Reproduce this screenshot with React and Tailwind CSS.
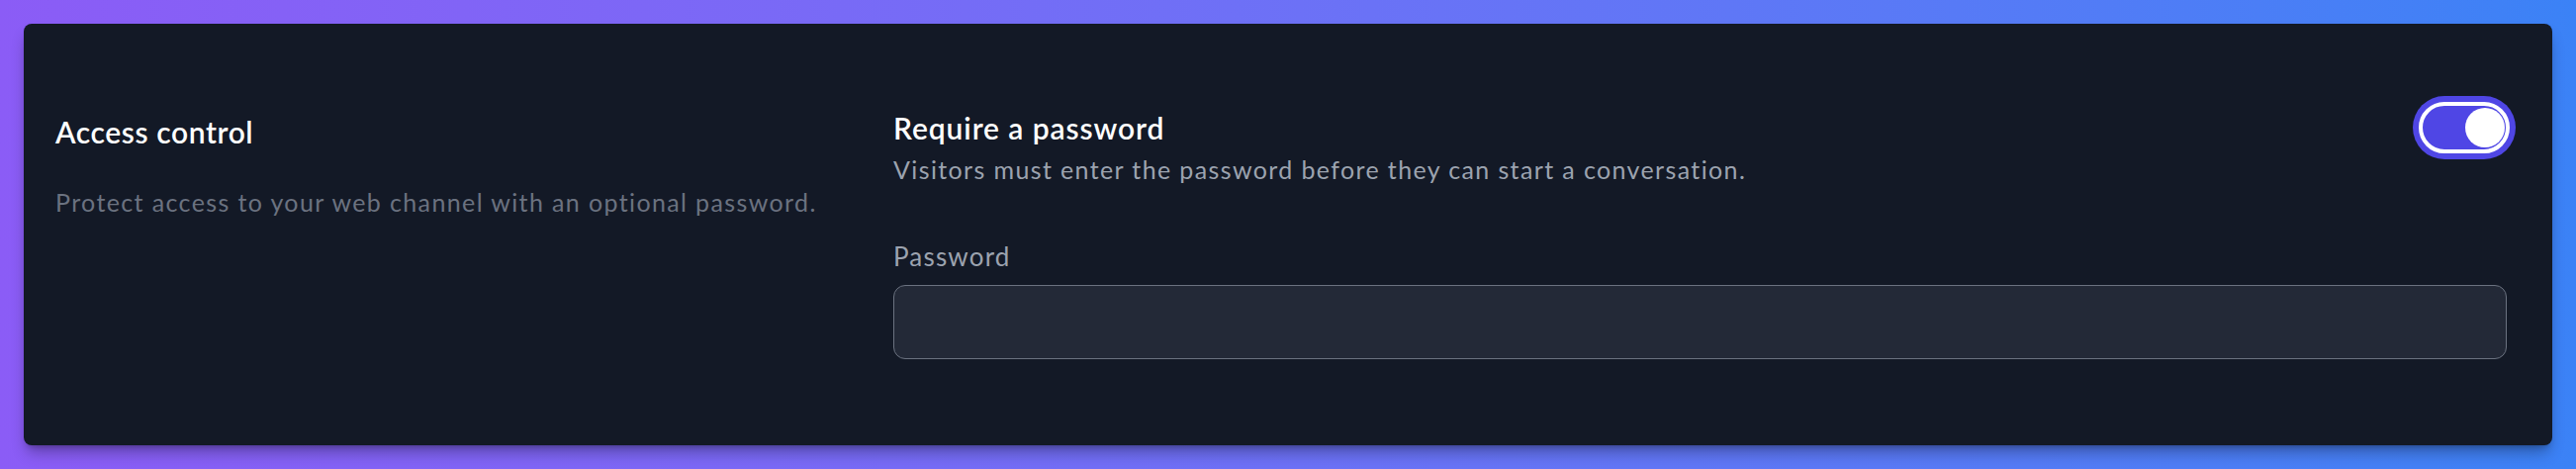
import { useState } from "react";

function Toggle({ checked, onChange }) {
  return (
    <button
      type="button"
      role="switch"
      aria-checked={checked}
      onClick={() => onChange(!checked)}
      className="-mr-[9px] w-[104px] h-[64px] shrink-0 rounded-full bg-[#4f46e5] p-[6px]"
    >
      <span className="flex h-full w-full items-center justify-end rounded-full border-[4px] border-white bg-[#4f46e5] px-[1px]">
        <span className="block h-[40px] w-[40px] rounded-full bg-white" />
      </span>
    </button>
  );
}

export default function App() {
  const [requirePassword, setRequirePassword] = useState(true);
  const [password, setPassword] = useState("");

  return (
    <div
      className="min-h-screen w-full bg-gradient-to-r from-[#8b5cf6] to-[#3b82f6] p-6"
      style={{ fontFamily: "Lato, 'Noto Sans', sans-serif" }}
    >
      <div className="rounded-lg bg-[#131926] pl-8 pr-[46px] pt-[82px] pb-[87px] shadow-lg shadow-black/30">
        <div className="grid grid-cols-3 gap-x-[63px]">
          {/* left: section info */}
          <div>
            <h2 className="text-[30px] leading-[54px] font-semibold tracking-[0.02em] text-white">
              Access control
            </h2>
            <p className="mt-[25px] text-[25px] leading-[38px] tracking-[0.055em] text-[#6b7280]">
              Protect access to your web channel with an optional password.
            </p>
          </div>

          {/* right: settings */}
          <div className="col-span-2">
            <div className="flex items-start justify-between">
              <div>
                <h3 className="text-[30px] leading-[46px] font-semibold tracking-[0.03em] text-white">
                  Require a password
                </h3>
                <p className="text-[25px] leading-[38px] tracking-[0.055em] text-[#9ca3af]">
                  Visitors must enter the password before they can start a
                  conversation.
                </p>
              </div>
              <div className="flex h-[46px] items-center">
                <Toggle
                  checked={requirePassword}
                  onChange={setRequirePassword}
                />
              </div>
            </div>

            <label className="mt-[51px] block text-[26px] leading-[36px] tracking-[0.045em] text-[#9ca3af]">
              Password
            </label>
            <input
              type="password"
              value={password}
              onChange={(e) => setPassword(e.target.value)}
              className="mt-[11px] block h-[75px] w-full rounded-xl border border-[#6b7280] bg-[#232937] px-5 text-[25px] text-white outline-none"
            />
          </div>
        </div>
      </div>
    </div>
  );
}
